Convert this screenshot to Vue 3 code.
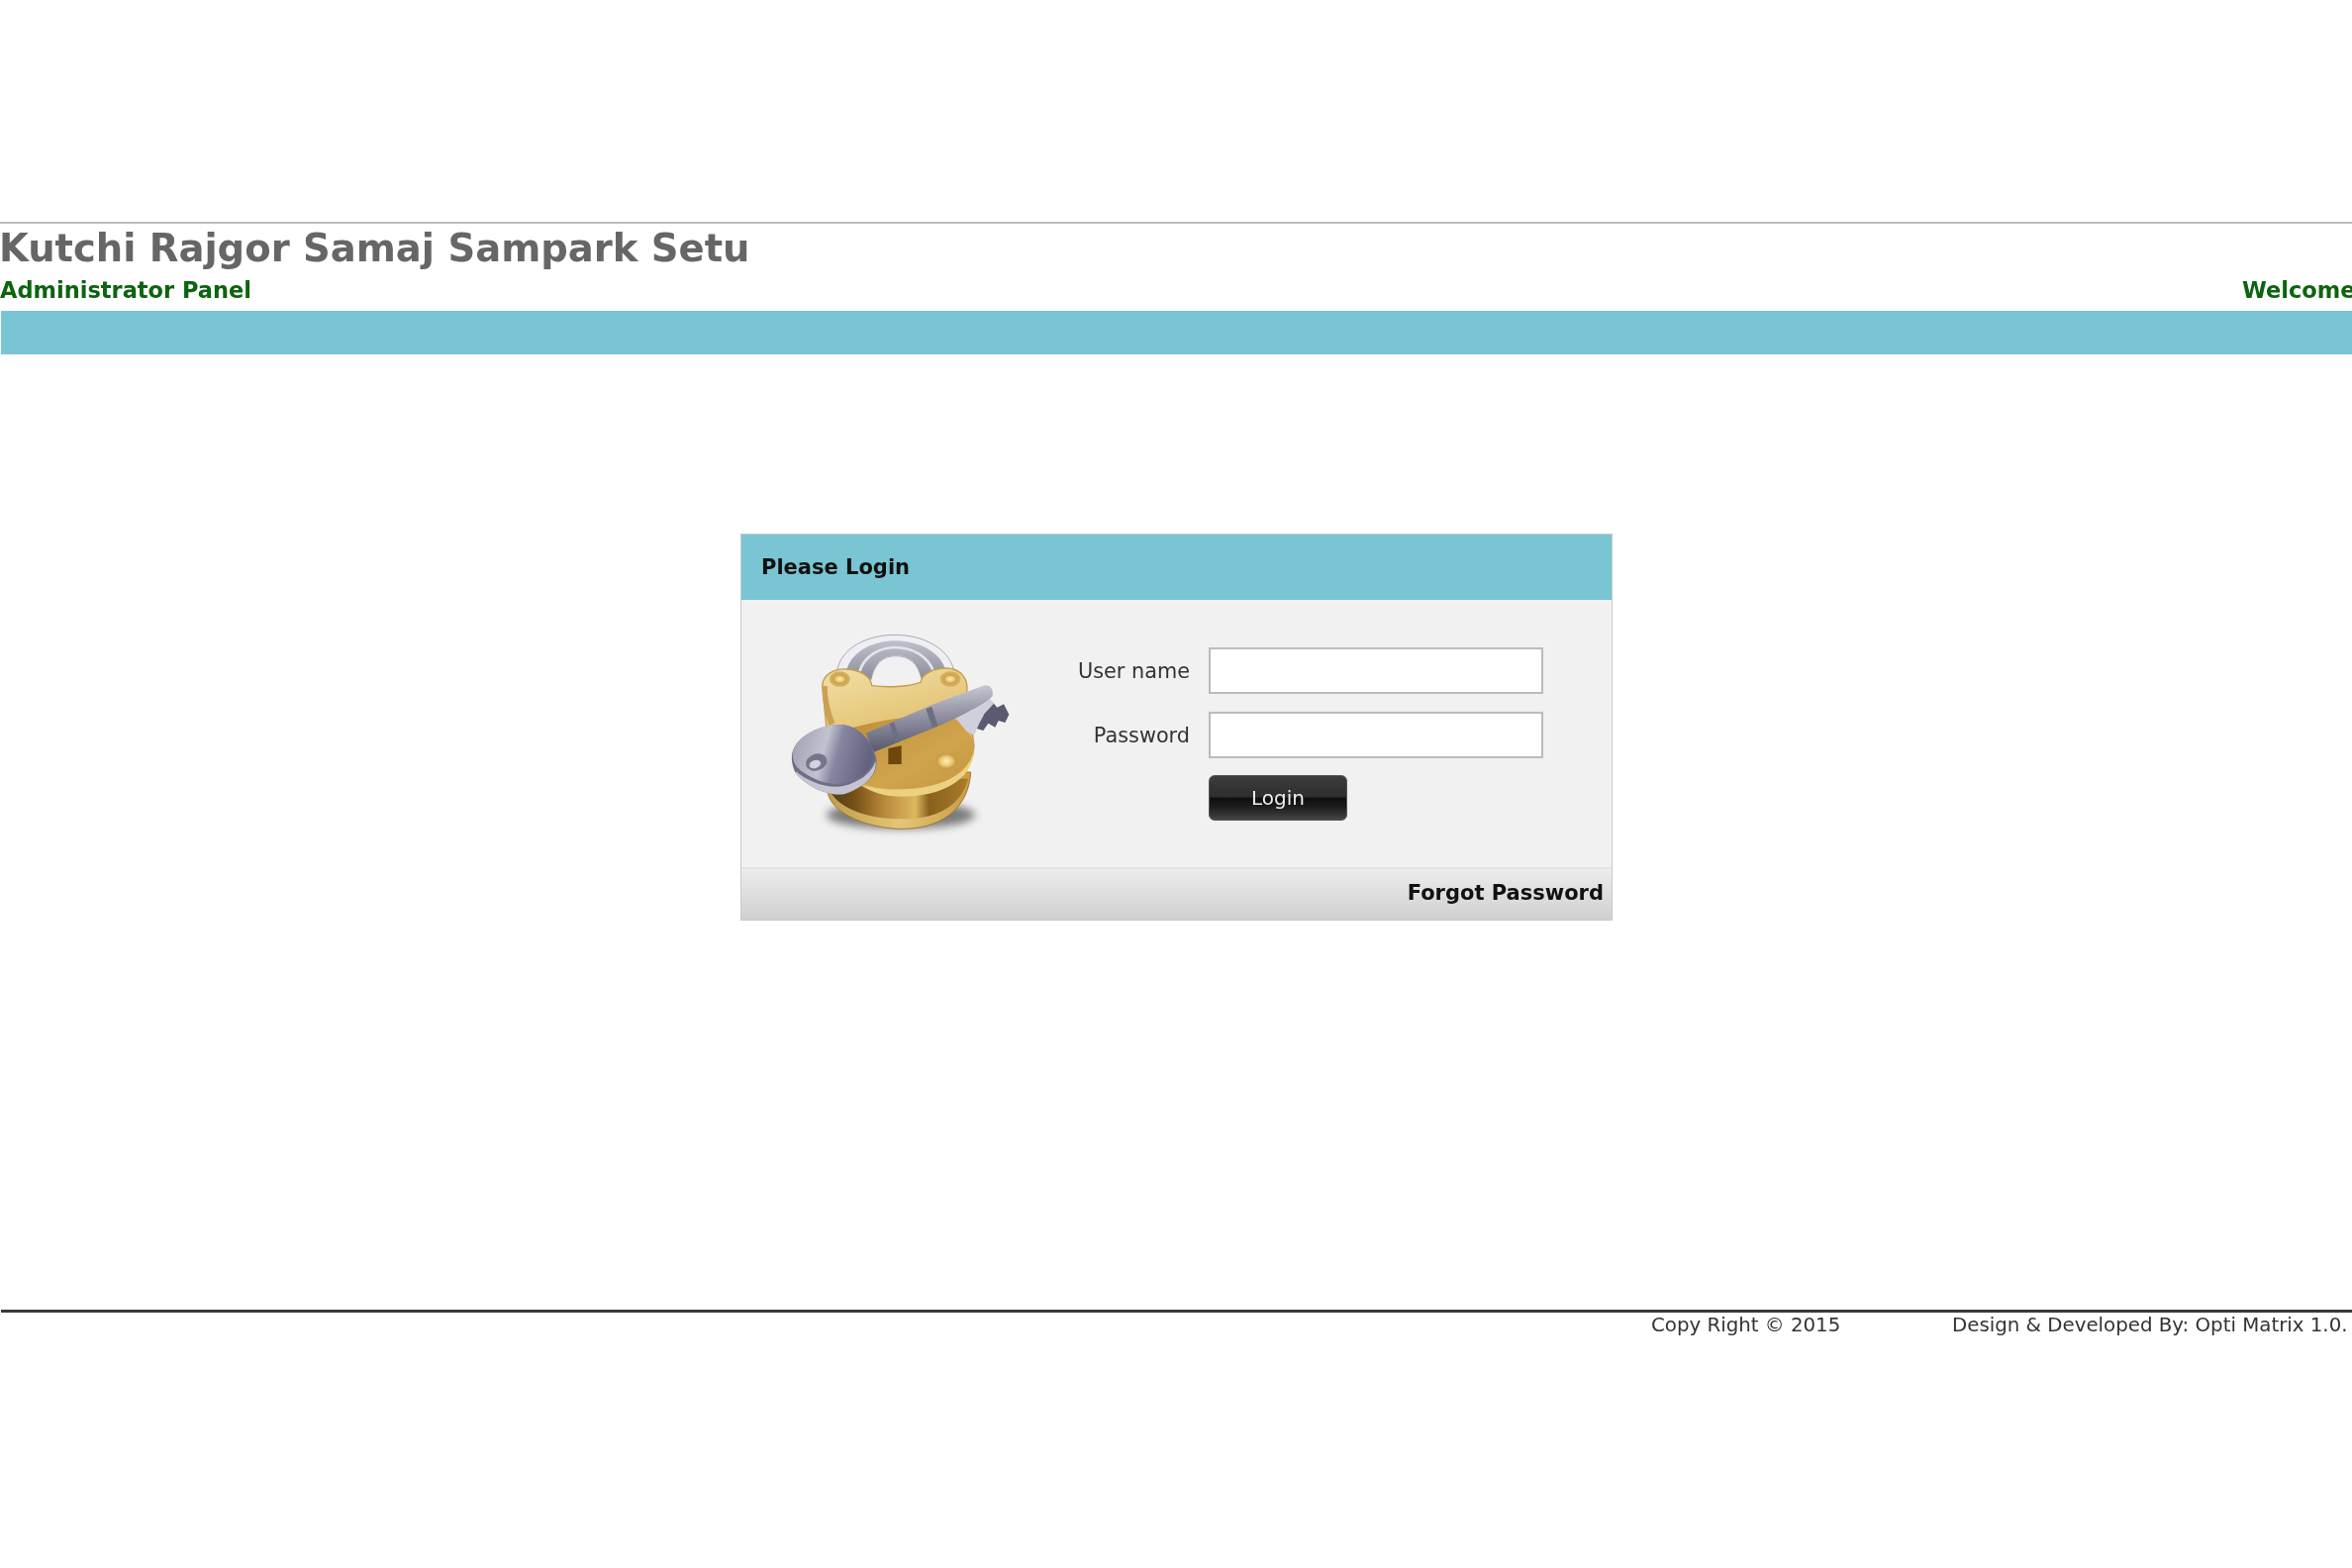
<template>
  <div class="page">
    <header class="top">
      <h1 class="title">Kutchi Rajgor Samaj Sampark Setu</h1>
      <div class="subrow">
        <span>Administrator Panel</span>
        <span class="welcome">Welcome</span>
      </div>
      <div class="bar"></div>
    </header>

    <section class="card">
      <div class="card-head">Please Login</div>
      <div class="card-body">
        <svg class="lock" viewBox="0 0 750 690" width="250" height="230">
          <defs>
            <filter id="soft" x="-5%" y="-5%" width="110%" height="110%"><feGaussianBlur stdDeviation="1.6" /></filter>
            <filter id="shade" x="-20%" y="-50%" width="140%" height="200%"><feGaussianBlur stdDeviation="12" /></filter>
            <linearGradient id="upper" x1="0" y1="0" x2="0.3" y2="1">
              <stop offset="0" stop-color="#f0dfa6" />
              <stop offset="0.4" stop-color="#e8cb82" />
              <stop offset="1" stop-color="#d2a850" />
            </linearGradient>
            <linearGradient id="face" x1="0" y1="0" x2="1" y2="1">
              <stop offset="0" stop-color="#bd8f3a" />
              <stop offset="0.6" stop-color="#d0a44c" />
              <stop offset="1" stop-color="#c4963e" />
            </linearGradient>
            <linearGradient id="drum" x1="0" y1="0" x2="1" y2="0">
              <stop offset="0" stop-color="#4a3a1c" />
              <stop offset="0.2" stop-color="#7a5418" />
              <stop offset="0.4" stop-color="#b98a3c" />
              <stop offset="0.62" stop-color="#dcb860" />
              <stop offset="0.72" stop-color="#8a601e" />
              <stop offset="1" stop-color="#a87c2c" />
            </linearGradient>
            <linearGradient id="rim" x1="0" y1="0" x2="1" y2="0">
              <stop offset="0" stop-color="#c09a4c" />
              <stop offset="0.5" stop-color="#e4c678" />
              <stop offset="1" stop-color="#c79c44" />
            </linearGradient>
            <linearGradient id="bow" x1="0" y1="0" x2="1" y2="0.2">
              <stop offset="0" stop-color="#9e9eb2" />
              <stop offset="0.45" stop-color="#c2c2d0" />
              <stop offset="0.62" stop-color="#8686a2" />
              <stop offset="1" stop-color="#64647f" />
            </linearGradient>
            <linearGradient id="shaft" x1="0.1" y1="0" x2="0.25" y2="1">
              <stop offset="0" stop-color="#d8d8e2" />
              <stop offset="0.4" stop-color="#a0a0b0" />
              <stop offset="1" stop-color="#54546a" />
            </linearGradient>
            <linearGradient id="hoop" x1="0" y1="0" x2="0" y2="1">
              <stop offset="0" stop-color="#c0c0ca" />
              <stop offset="0.6" stop-color="#a2a2b0" />
              <stop offset="1" stop-color="#8a8a98" />
            </linearGradient>
            <radialGradient id="rivet">
              <stop offset="0" stop-color="#fff0b8" />
              <stop offset="0.6" stop-color="#e9c770" />
              <stop offset="1" stop-color="#c09244" />
            </radialGradient>
          </defs>

          <ellipse cx="390" cy="610" rx="225" ry="42" fill="#3a3a3a" opacity="0.65" filter="url(#shade)" />

          <g filter="url(#soft)">
            <!-- shackle -->
            <path d="M198 168C212 102 290 64 372 64C456 64 532 102 550 168L452 196C442 150 415 128 375 128C335 128 310 152 300 200Z" fill="#eeeef3" stroke="#a8a8b4" stroke-width="3" />
            <path d="M226 172C240 112 310 82 372 82C440 82 510 112 526 172L452 194C442 148 415 126 375 126C335 126 310 150 300 198Z" fill="url(#hoop)" />
            <path d="M264 178C278 128 326 102 372 102C424 102 474 128 490 178" fill="none" stroke="#e4e4ec" stroke-width="8" />

            <!-- drum under the body -->
            <path d="M168 540C180 610 300 652 395 652C500 652 595 600 602 480L170 480Z" fill="url(#rim)" stroke="#a07a2e" stroke-width="3" />
            <path d="M172 530C200 595 300 622 395 622C490 622 570 590 594 500L178 480Z" fill="url(#drum)" />

            <!-- upper plate and lower face -->
            <path d="M152 218C154 184 188 166 224 168C268 170 300 190 302 218C350 224 410 222 450 208C454 182 490 164 530 165C570 167 596 196 590 236L612 400C612 476 510 552 395 552C300 552 200 500 170 400Z" fill="url(#upper)" stroke="#c49c4c" stroke-width="4" />
            <path d="M152 218C150 250 160 300 172 340L190 330C174 290 166 250 168 220Z" fill="#caa052" />
            <path d="M240 346C340 320 440 304 530 306C582 330 612 370 612 414C610 480 520 528 396 530C340 530 290 524 250 500Z" fill="url(#face)" />
            <path d="M270 518C320 532 360 534 396 532C510 530 600 486 611 412C612 500 516 554 395 554C340 554 300 540 270 518Z" fill="#ecd280" />

            <!-- rivets and keyhole -->
            <ellipse cx="205" cy="198" rx="31" ry="23" fill="#d4ad5c" />
            <ellipse cx="205" cy="198" rx="21" ry="14" fill="url(#rivet)" />
            <ellipse cx="540" cy="198" rx="31" ry="23" fill="#d4ad5c" />
            <ellipse cx="540" cy="198" rx="21" ry="14" fill="url(#rivet)" />
            <ellipse cx="528" cy="447" rx="31" ry="24" fill="url(#rivet)" />
            <path d="M352 408L392 400L392 456L352 456Z" fill="#6e4610" />

            <!-- key -->
            <path d="M645 272L668 268L682 284L702 274L718 305L706 330L686 324L676 344L655 332L640 354L620 348L630 305Z" fill="#5a5a70" />
            <path d="M548 300L650 246L672 272L644 302L628 332L612 368L590 358L568 330Z" fill="#d0d0dc" />
            <path d="M284 362L490 274L640 218C658 212 672 228 668 248C662 262 604 292 566 312L506 340L306 420Z" fill="url(#shaft)" />
            <path d="M356 334L372 392L386 386L370 328ZM466 288L486 346L502 340L484 282Z" fill="#6e6e82" />
            <path d="M60 430C64 382 130 340 198 336C252 334 300 372 316 440C322 490 282 524 220 546C170 556 102 522 72 484C62 466 58 446 60 430Z" fill="#6e6e88" />
            <path d="M62 424C68 378 132 338 198 336C252 334 296 370 310 436C300 480 262 500 214 514C168 524 108 496 76 466C66 454 62 440 62 424Z" fill="url(#bow)" />
            <path d="M72 478C110 510 170 532 216 522C262 510 300 486 314 446C318 490 282 524 220 546C170 556 102 522 72 484Z" fill="#c4c4d2" />
            <ellipse cx="134" cy="450" rx="33" ry="25" fill="#74748c" transform="rotate(-20 134 450)" />
            <ellipse cx="130" cy="456" rx="18" ry="12" fill="#d2d2de" transform="rotate(-20 130 456)" />
          </g>
        </svg>

        <form class="login" @submit.prevent>
          <label for="uname">User name</label>
          <input id="uname" type="text" />
          <label for="pass">Password</label>
          <input id="pass" type="password" />
          <button type="submit">Login</button>
        </form>
      </div>
      <div class="card-foot">Forgot Password</div>
    </section>

    <footer class="foot">
      <span>Copy Right © 2015</span>
      <span>Design &amp; Developed By: Opti Matrix 1.0.</span>
    </footer>
  </div>
</template>

<script setup>
</script>

<style>
html, body {
  background: #fff;
  overflow: hidden;
}
</style>

<style scoped>
.page {
  width: 2376px;
  height: 1584px;
  padding-top: 224px;
  box-sizing: border-box;
  overflow: hidden;
  font-family: "DejaVu Sans", Verdana, sans-serif;
  filter: blur(0.45px);
}
.top {
  border-top: 2px solid #bdbdbd;
}
.title {
  margin: 0 0 0 -1px;
  height: 50px;
  font-size: 38.5px;
  line-height: 50px;
  font-weight: bold;
  color: #666;
  white-space: nowrap;
}
.subrow {
  display: grid;
  grid-template-columns: 2265px auto;
  height: 38px;
  font-size: 22.5px;
  line-height: 34px;
  font-weight: bold;
  color: #0d6410;
  white-space: nowrap;
}
.bar {
  height: 44px;
  margin-left: 1px;
  background: #79c5d3;
}
.card {
  width: 881px;
  margin: 181px 0 0 748px;
  box-sizing: border-box;
  border: 1px solid #c9c9c9;
  background: #f1f1f1;
}
.card-head {
  height: 66px;
  padding-left: 20px;
  font-size: 21px;
  line-height: 66px;
  font-weight: bold;
  color: #111;
  background: #79c5d3;
}
.card-body {
  display: flex;
  align-items: flex-start;
  height: 270px;
}
.lock {
  flex: none;
  margin: 14px 0 0 31px;
}
.login {
  display: grid;
  grid-template-columns: 172px 338px;
  column-gap: 19px;
  row-gap: 18px;
  margin-top: 48px;
  align-items: center;
}
.login label {
  text-align: right;
  font-size: 20.8px;
  color: #333;
}
.login input {
  box-sizing: border-box;
  width: 338px;
  height: 47px;
  padding: 0 8px;
  border: 2px solid #bbb;
  background: #fff;
}
.login button {
  grid-column: 2;
  width: 140px;
  height: 46px;
  margin-top: -1px;
  border: 1px solid #555;
  border-radius: 6px;
  font: 20px "DejaVu Sans", Verdana, sans-serif;
  color: #eee;
  background: linear-gradient(#3c3c3c 0%, #2e2e2e 48%, #0e0e0e 50%, #1c1c1c 70%, #444 100%);
}
.card-foot {
  height: 53px;
  box-sizing: border-box;
  border-top: 2px solid #e2e2e2;
  padding-right: 8px;
  text-align: right;
  font-size: 21px;
  line-height: 48px;
  font-weight: bold;
  color: #111;
  background: linear-gradient(#ececec, #d0d0d0);
}
.foot {
  display: grid;
  grid-template-columns: 1667px 304px auto;
  margin-top: 393px;
  margin-left: 1px;
  height: 40px;
  border-top: 3px solid #3a3a3a;
  font-size: 19.8px;
  line-height: 26px;
  color: #333;
  white-space: nowrap;
}
.foot span:first-child {
  grid-column: 2;
}
</style>
